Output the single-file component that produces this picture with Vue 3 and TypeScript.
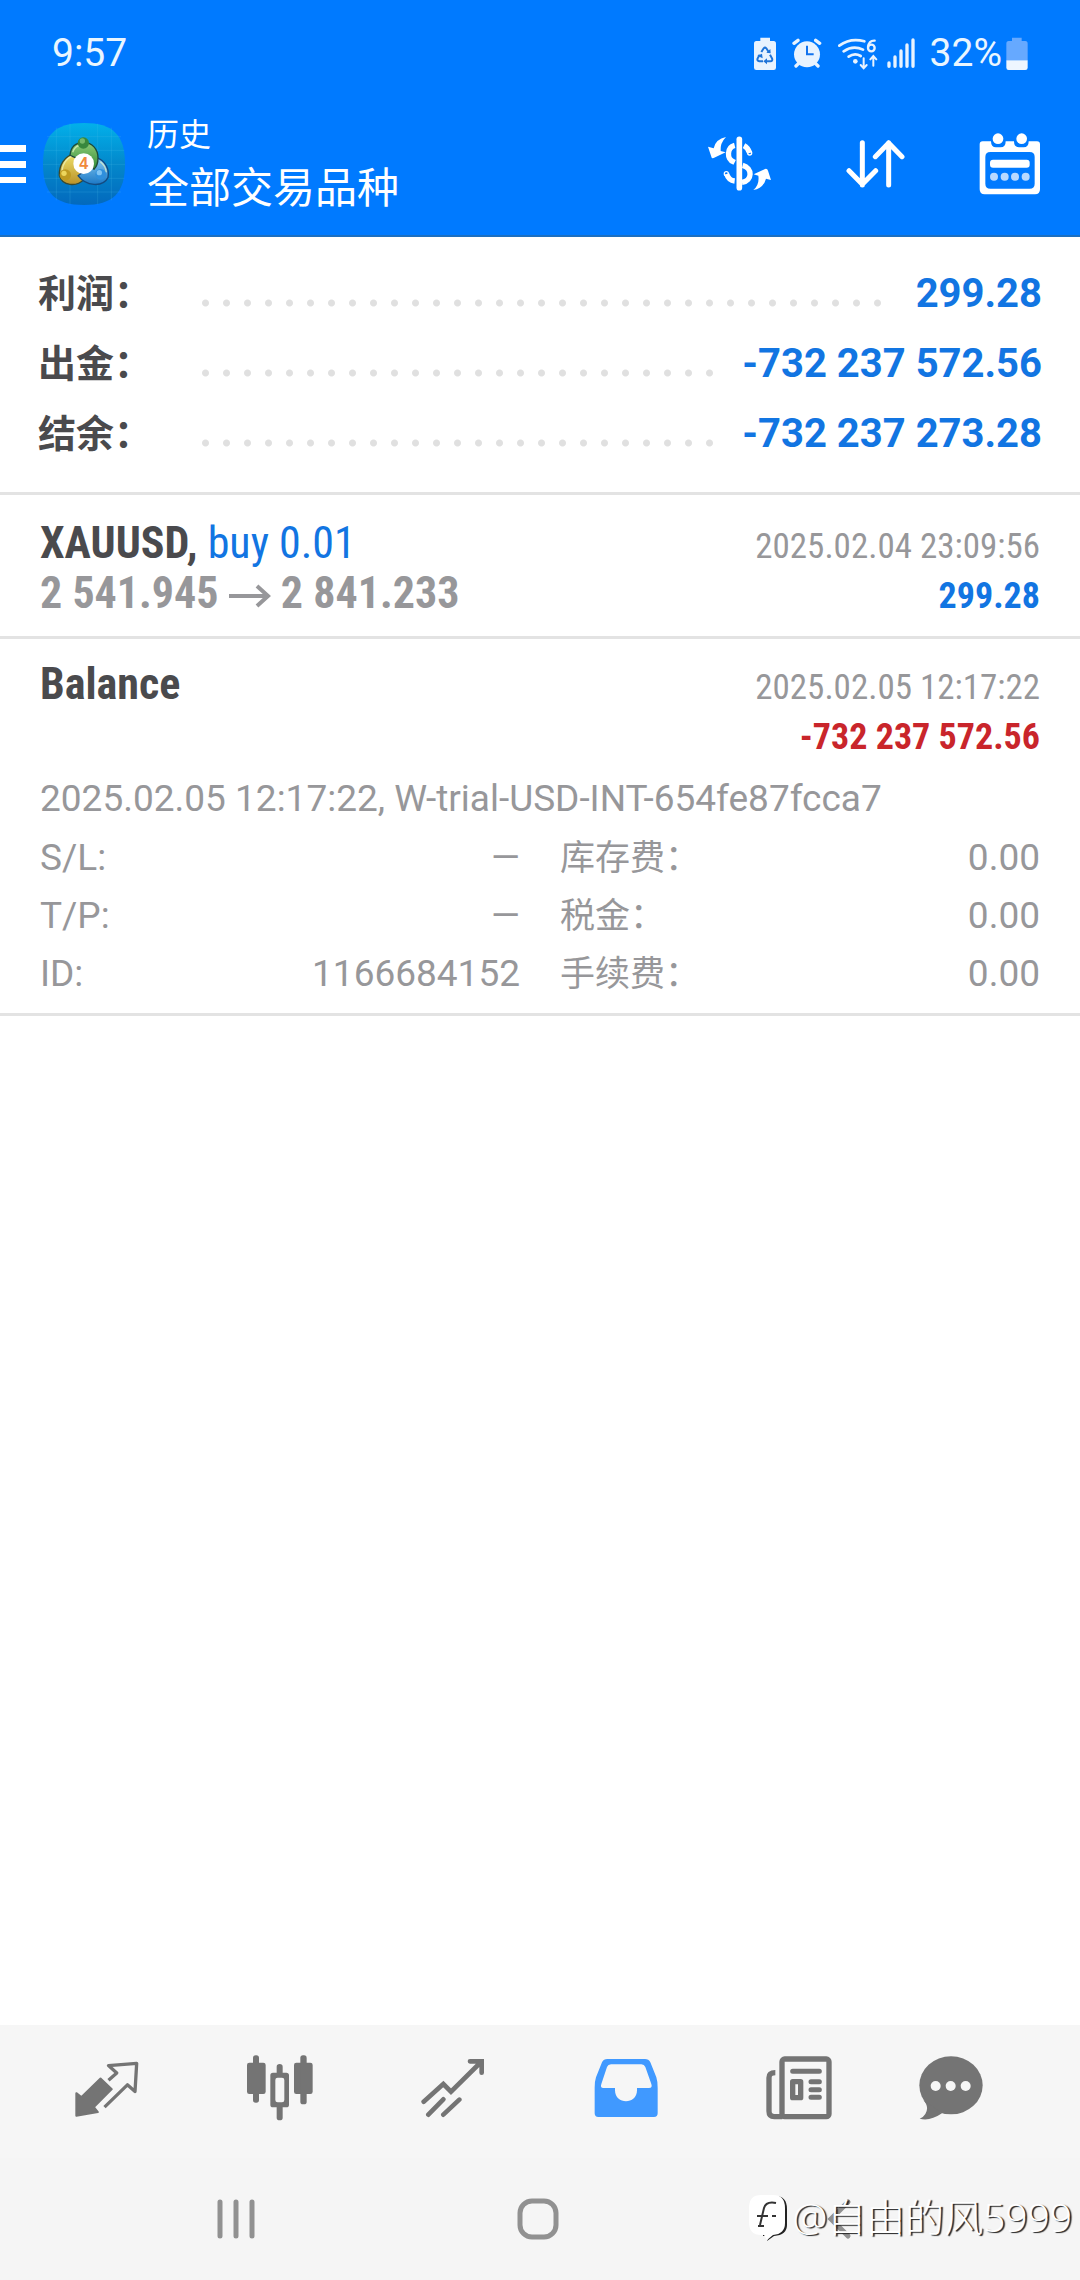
<script setup lang="ts">
interface SummaryRow {
  label: string
  value: string
}

interface DetailRow {
  label: string
  value: string
}

const summary: SummaryRow[] = [
  { label: '利润：', value: '299.28' },
  { label: '出金：', value: '-732 237 572.56' },
  { label: '结余：', value: '-732 237 273.28' },
]

const orderDetails: DetailRow[] = [
  { label: 'S/L:', value: '—' },
  { label: 'T/P:', value: '—' },
  { label: 'ID:', value: '1166684152' },
]

const feeDetails: DetailRow[] = [
  { label: '库存费：', value: '0.00' },
  { label: '税金：', value: '0.00' },
  { label: '手续费：', value: '0.00' },
]
</script>

<template>
  <div class="screen">
    <header class="top">
      <div class="status">
        <span class="clock">9:57</span>
        <svg class="saver" viewBox="159 110 66 99" width="22" height="33" aria-hidden="true">
          <path fill="#e8f3ff" d="M178 112h29v10h11q7 0 7 8v72q0 7-7 7h-52q-7 0-7-7v-72q0-8 7-8h12z" />
          <path fill="none" stroke="#1f74d8" stroke-width="6" d="M181 155l7-11q4-4 8 0l7 11M207 163l6 11q3 8-5 9h-12M186 183h-11q-8-2-5-9l6-11" />
          <path fill="#1f74d8" d="M198 174v18l-11-9zM169 166l14-6 2 14zM196 157l13 2-1-13z" />
        </svg>
        <svg class="alarm" viewBox="275 115 90 90" width="30" height="30" aria-hidden="true">
          <circle cx="320" cy="164" r="39" fill="#e8f3ff" />
          <path fill="none" stroke="#e8f3ff" stroke-width="10" stroke-linecap="round" d="M281 131l12-9M346 122l12 9M287 199l8-8M345 191l8 8" />
          <path fill="none" stroke="#1273ee" stroke-width="6" d="M320 138v26h20" />
        </svg>
        <svg class="wifi" viewBox="410 111 120 99" width="40" height="33" aria-hidden="true">
          <g fill="none" stroke="#e8f3ff" stroke-width="8" stroke-linecap="round">
            <path d="M414 137q34-25 75-13M427 154q28-19 58-5M442 170q18-13 36-2" />
            <path d="M520 122q-17-1-20 19" stroke-width="7" />
            <circle cx="510" cy="144" r="10" stroke-width="7" />
            <path d="M487 175v29M478 195l9 10 9-10M516 197v-28M507 178l9-10 9 10" stroke-width="6" />
          </g>
          <circle cx="462" cy="184" r="7" fill="#e8f3ff" />
        </svg>
        <svg class="signal" viewBox="558 115 84 90" width="28" height="30" aria-hidden="true">
          <path stroke="#e8f3ff" stroke-width="10" stroke-linecap="round" d="M564 190v10M582 172v28M600 154v46M618 136v64M636 121v79" />
        </svg>
        <span class="percent">32%</span>
        <svg class="battery" viewBox="920 110 66 99" width="22" height="33" aria-hidden="true">
          <path fill="#66a9ff" d="M938 112h29v10h11q7 0 7 8v50h-64v-50q0-8 7-8h10z" />
          <path fill="#eef6ff" d="M921 180h64v22q0 7-7 7h-50q-7 0-7-7z" />
        </svg>
      </div>

      <div class="appbar">
        <button class="icon-button menu" type="button" aria-label="菜单">
          <svg viewBox="0 0 26 38" width="26" height="38">
            <path fill="#fff" d="M0 0h26v7H0zM0 16h26v7H0zM0 32h26v6H0z" />
          </svg>
        </button>
        <svg class="logo" viewBox="40 36 246 246" width="82" height="82" aria-hidden="true">
          <defs>
            <linearGradient id="tile" x1="0" y1="0" x2="0" y2="1">
              <stop offset="0" stop-color="#02b0ea" />
              <stop offset="0.5" stop-color="#0388cb" />
              <stop offset="1" stop-color="#0369bd" />
            </linearGradient>
            <linearGradient id="green" x1="0" y1="0" x2="0" y2="1">
              <stop offset="0" stop-color="#8fcb76" />
              <stop offset="1" stop-color="#2f8a38" />
            </linearGradient>
            <linearGradient id="gold" x1="0" y1="0" x2="0" y2="1">
              <stop offset="0" stop-color="#f1e26a" />
              <stop offset="1" stop-color="#b9922a" />
            </linearGradient>
            <linearGradient id="azure" x1="0" y1="0" x2="0" y2="1">
              <stop offset="0" stop-color="#86caf2" />
              <stop offset="1" stop-color="#1b78c6" />
            </linearGradient>
          </defs>
          <path fill="url(#tile)" d="M163 36C250 36 286 72 286 159S250 282 163 282 40 246 40 159 76 36 163 36z" />
          <path fill="none" stroke="#4fc3ea" stroke-opacity="0.3" stroke-width="2" d="M80 50v218M121 38v242M204 38v242M245 50v218M52 77h222M42 118h242M40 160h246M42 202h242M52 243h222" />
          <g stroke-width="4" stroke-linejoin="round">
            <path fill="url(#gold)" stroke="#3b4a2e" d="M136 127c-34 8-48 38-47 66 8 32 52 36 74 12l-14-28z" />
            <path fill="url(#azure)" stroke="#134a80" d="M200 140c26 8 40 34 35 60-16 30-66 26-90-6l22-16z" />
            <path fill="url(#green)" stroke="#1d4a3a" d="M121 133c2-26 18-38 42-38s42 18 42 46c0 16-6 28-12 34l-22-38-36 2z" />
          </g>
          <path fill="none" stroke="#eef7c8" stroke-opacity="0.7" stroke-width="4" d="M129 124q6-18 22-22M97 178q4-30 28-42M212 152q16 12 18 32" />
          <circle cx="161" cy="96" r="17" fill="#38873d" />
          <circle cx="158" cy="90" r="8" fill="#75b86a" />
          <circle cx="107" cy="192" r="17" fill="#bd9a20" />
          <circle cx="103" cy="187" r="8" fill="#ecd65c" />
          <circle cx="213" cy="190" r="16" fill="#2f8fdc" />
          <circle cx="209" cy="185" r="8" fill="#7fc4f4" />
          <circle cx="162" cy="158" r="31" fill="#fff" />
          <text x="162" y="175" class="logo-digit" text-anchor="middle">4</text>
        </svg>
        <div class="titles">
          <p class="section">历史</p>
          <h1 class="scope">全部交易品种</h1>
        </div>
        <div class="actions">
          <button class="icon-button" type="button" aria-label="货币">
            <svg viewBox="24 408 192 165" width="64" height="55">
              <g fill="none" stroke="#fff">
                <path stroke-width="17" stroke-linecap="round" d="M118 418v145" />
                <path stroke-width="16" d="M104 436c-24 6-24 42-4 49l4 2M104 543q-18-2-24-21M132 437q12 6 17 22" />
                <path stroke-width="16" d="M128 496c30 8 30 46-2 51" />
                <circle cx="79" cy="521" r="2" stroke-width="12" />
                <circle cx="149" cy="459" r="2" stroke-width="12" />
              </g>
              <path fill="#fff" d="M78 411q-18 18-16 42l15 4-36 17q-6 2-7-4l-10-30 17 5q6-28 37-34z" />
              <path fill="#fff" d="M160 570q19-16 15-43l-14-4 34-16q7-2 9 5l9 28-15-4q-7 28-38 34z" />
            </svg>
          </button>
          <button class="icon-button" type="button" aria-label="排序">
            <svg viewBox="438 416 177 147" width="59" height="49">
              <path fill="none" stroke="#fff" stroke-width="15" stroke-linecap="round" stroke-linejoin="round" d="M487 427v127M447 511l40 41 40-41M566 554V427M526 469l40-41 40 41" />
            </svg>
          </button>
          <button class="icon-button" type="button" aria-label="日期">
            <svg viewBox="838 394 186 186" width="62" height="62">
              <path fill="#fff" fill-rule="evenodd" d="M840 428q0-9 9-9h25q0 18 15 18h14q15 0 15-18h25q0 18 15 18h14q15 0 15-18h25q9 0 9 9v135q0 15-15 15H855q-15 0-15-15zM872 451q-15 0-15 15v80q0 15 15 15h118q15 0 15-15v-80q0-15-15-15z" />
              <circle cx="895" cy="411" r="16" fill="#fff" />
              <circle cx="966" cy="411" r="16" fill="#fff" />
              <rect x="871" y="474" width="119" height="24" rx="9" fill="#fff" />
              <g fill="#b8d9ff">
                <circle cx="883" cy="525" r="12" />
                <circle cx="915" cy="525" r="12" />
                <circle cx="946" cy="525" r="12" />
                <circle cx="978" cy="525" r="12" />
              </g>
            </svg>
          </button>
        </div>
      </div>
    </header>

    <main class="content">
      <dl class="summary">
        <div v-for="row in summary" :key="row.label" class="summary-row">
          <dt>{{ row.label }}</dt>
          <dd>{{ row.value }}</dd>
        </div>
      </dl>

      <article class="entry">
        <div class="line">
          <h2 class="symbol">XAUUSD, <span class="side">buy 0.01</span></h2>
          <time class="time">2025.02.04 23:09:56</time>
        </div>
        <div class="line">
          <p class="prices">
            2 541.945
            <svg class="arrow" viewBox="0 0 42 24" width="42" height="24" role="img" aria-label="至">
              <path fill="none" stroke="#97979a" stroke-width="4" d="M0 12h39M28 2l11 10-11 10" />
            </svg>
            2 841.233
          </p>
          <p class="amount gain">299.28</p>
        </div>
      </article>

      <article class="entry open">
        <div class="line">
          <h2 class="symbol">Balance</h2>
          <time class="time">2025.02.05 12:17:22</time>
        </div>
        <div class="line">
          <p class="amount loss">-732 237 572.56</p>
        </div>
        <p class="comment">2025.02.05 12:17:22, W-trial-USD-INT-654fe87fcca7</p>
        <div class="details">
          <dl class="detail-list">
            <div v-for="row in orderDetails" :key="row.label" class="detail">
              <dt>{{ row.label }}</dt>
              <dd>{{ row.value }}</dd>
            </div>
          </dl>
          <dl class="detail-list">
            <div v-for="row in feeDetails" :key="row.label" class="detail">
              <dt>{{ row.label }}</dt>
              <dd>{{ row.value }}</dd>
            </div>
          </dl>
        </div>
      </article>
    </main>

    <nav class="tabs">
      <button class="icon-button" type="button" aria-label="行情">
        <svg viewBox="104 138 196 196" width="65" height="65">
          <path fill="#747474" stroke="#747474" stroke-width="6" stroke-linejoin="round" d="M184 206l34 32-54 54 12 15-65 11v-68l15 12z" />
          <path fill="none" stroke="#747474" stroke-width="10" stroke-linejoin="round" d="M208 211l25-22-25-22 85-7-5 85-23-20-69 67" />
        </svg>
      </button>
      <button class="icon-button" type="button" aria-label="图表">
        <svg viewBox="622 138 198 198" width="66" height="66">
          <g fill="#747474">
            <rect x="622" y="161" width="56" height="94" rx="7" />
            <rect x="640" y="139" width="18" height="142" rx="8" />
            <rect x="763" y="161" width="56" height="94" rx="7" />
            <rect x="782" y="139" width="19" height="147" rx="8" />
            <path fill-rule="evenodd" d="M711 191v-18q0-8 9-8t9 8v18h11q8 0 8 8v88q0 8-8 8h-11v31q0 8-9 8t-9-8v-31h-11q-8 0-8-8v-88q0-8 8-8zM714 206q-7 0-7 7v60q0 7 7 7h13q7 0 7-7v-60q0-7-7-7z" />
          </g>
        </svg>
      </button>
      <button class="icon-button" type="button" aria-label="交易">
        <svg viewBox="1144 138 192 192" width="64" height="64">
          <path fill="none" stroke="#747474" stroke-width="14" stroke-linecap="round" d="M1152 275l59-53 23 23 90-89M1291 154h35v34M1166 314l45-46M1211 314l48-45" />
        </svg>
      </button>
      <button class="icon-button" type="button" aria-label="历史" aria-current="page">
        <svg viewBox="284 138 192 192" width="64" height="64">
          <path fill="#4099ff" fill-rule="evenodd" d="M324 147h113q11 0 16 10l18 45q4 12 4 31v77q0 11-11 11H297q-11 0-11-11v-77q0-19 4-31l18-45q5-10 16-10zM335 163q-9 0-12 8l-17 51q-4 12 6 12h35v7c0 44 66 44 66 0v-7h36q11 0 7-12l-18-51q-3-8-12-8z" />
        </svg>
      </button>
      <button class="icon-button" type="button" aria-label="新闻">
        <svg viewBox="805 138 198 192" width="66" height="64">
          <g fill="none" stroke="#747474">
            <rect x="853" y="147" width="141" height="173" rx="8" stroke-width="16" />
            <path stroke-width="16" d="M833 188q-19 0-19 15v101q0 16 16 16h24" />
            <path stroke-width="15" stroke-linecap="round" d="M885 184h80M940 215h25M940 239h25M940 262h25" />
            <rect x="885" y="215" width="24" height="48" stroke-width="16" stroke-linejoin="round" />
          </g>
        </svg>
      </button>
      <button class="icon-button" type="button" aria-label="消息">
        <svg viewBox="1258 138 192 192" width="64" height="64">
          <ellipse cx="1354" cy="226" rx="95" ry="87" fill="#747474" />
          <path fill="#747474" d="M1271 270q19 21 6 42-5 9-17 14 30 9 67-16z" />
          <g fill="#f6f6f6">
            <circle cx="1308" cy="228" r="15" />
            <circle cx="1353" cy="228" r="15" />
            <circle cx="1398" cy="228" r="15" />
          </g>
        </svg>
      </button>
    </nav>

    <footer class="system">
      <button class="icon-button" type="button" aria-label="最近">
        <svg viewBox="0 0 38 42" width="38" height="42">
          <path stroke="#919191" stroke-width="5" stroke-linecap="round" d="M3 4v34M19 4v34M35 4v34" />
        </svg>
      </button>
      <button class="icon-button" type="button" aria-label="主页">
        <svg viewBox="0 0 42 42" width="42" height="42">
          <rect x="3" y="3" width="36" height="36" rx="12" fill="none" stroke="#919191" stroke-width="5" />
        </svg>
      </button>
      <button class="icon-button" type="button" aria-label="返回">
        <svg viewBox="0 0 26 42" width="26" height="42">
          <path fill="none" stroke="#919191" stroke-width="5" stroke-linecap="round" d="M21 4L4 21l17 17" />
        </svg>
      </button>
      <p class="signature">
        <svg viewBox="0 0 40 48" width="40" height="48" aria-hidden="true">
          <path fill="#222" d="M15 3h12q12 0 12 13v16q0 10-13 11l-7 5 2-5h-6z" />
          <path fill="#fff" d="M13 2h12q12 0 12 13v15q0 11-12 12l-6 5-3-5h-3Q1 42 1 29V15Q1 2 13 2z" />
          <path fill="none" stroke="#333" stroke-width="2" d="M28 10q-10-2-12 5l-4 17M9 23h11M24 23h4M10 33h6" />
        </svg>
        <span>@自由的风5999</span>
      </p>
    </footer>
  </div>
</template>

<style>
body {
  margin: 0;
  background: #fff;
}
</style>

<style scoped>
.screen {
  display: flex;
  flex-direction: column;
  min-height: 100vh;
  background: #fff;
  color: #97979a;
  font-family: Roboto, 'Noto Sans CJK SC', sans-serif;
}

h1,
h2,
p,
dl,
dd {
  margin: 0;
  font-weight: 400;
}

svg {
  display: block;
  flex: none;
}

.icon-button {
  display: flex;
  align-items: center;
  justify-content: center;
  padding: 0;
  border: 0;
  background: none;
}

.top {
  background: #007aff;
  border-bottom: 2px solid #1c6fc0;
  color: #fff;
}

.status {
  display: flex;
  align-items: center;
  height: 106px;
  padding: 0 52px;
  font-size: 39px;
  color: #eaf6ff;
}

.clock {
  flex: 1;
}

.alarm,
.wifi {
  margin-left: 16px;
}

.signal {
  margin-left: 9px;
}

.percent {
  margin: 0 4px 0 15px;
}

.appbar {
  display: flex;
  align-items: center;
  height: 129px;
  padding: 0 39px 14px 0;
  box-sizing: border-box;
}

.logo {
  margin-left: 17px;
}

.logo-digit {
  font: 700 48px 'Liberation Sans', sans-serif;
  fill: #f08a3c;
}

.titles {
  flex: 1;
  margin-left: 22px;
}

.section {
  font-size: 32px;
  line-height: 50px;
}

.scope {
  font-size: 42px;
  line-height: 58px;
}

.actions {
  display: flex;
  align-items: center;
  gap: 74px;
}

.content {
  flex: 1;
}

.summary {
  padding: 22px 38px 23px;
  border-bottom: 3px solid #e3e3e3;
}

.summary-row {
  display: flex;
  align-items: baseline;
  height: 70px;
  line-height: 70px;
  color: #4a4a4d;
}

.summary-row::before {
  content: '';
  order: 1;
  flex: 1;
  align-self: center;
  height: 8px;
  margin: 18px 22px 0 0;
  background: radial-gradient(circle, #e0e0e0 3px, transparent 4px) 0 0 / 21px 8px repeat-x;
}

.summary-row dt {
  width: 157px;
  font-size: 38px;
  font-weight: 700;
}

.summary-row dd {
  order: 2;
  font-size: 40px;
  font-weight: 700;
  color: #1275e2;
}

.entry {
  padding: 23px 40px 18px;
  border-bottom: 3px solid #e3e3e3;
  font-family: 'Roboto Condensed', Roboto, sans-serif;
}

.entry.open {
  padding: 20px 40px 10px;
}

.line {
  display: flex;
  align-items: baseline;
  height: 50px;
  line-height: 50px;
}

/* Keeps every line on the baseline of the large text. */
.line::before {
  content: '\200b';
  width: 0;
  font-size: 44px;
}

.symbol,
.prices {
  margin-right: auto;
  font-size: 44px;
  font-weight: 700;
}

.symbol {
  color: #4a4a4d;
}

.side {
  font-weight: 400;
  color: #1275e2;
}

.time {
  font-size: 35px;
}

.arrow {
  display: inline-block;
  vertical-align: middle;
}

.amount {
  margin-left: auto;
  font-size: 36px;
  font-weight: 700;
}

.gain {
  color: #1275e2;
}

.loss {
  color: #c9252b;
}

.comment {
  margin-top: 10px;
  font-family: Roboto, sans-serif;
  font-size: 37px;
  line-height: 60px;
}

.details {
  display: grid;
  grid-template-columns: 1fr 1fr;
  column-gap: 40px;
  font-family: Roboto, 'Noto Sans CJK SC', sans-serif;
  font-size: 37px;
}

.detail {
  display: flex;
  justify-content: space-between;
  align-items: baseline;
  height: 58px;
  line-height: 58px;
}

.detail-list:last-child dt {
  font-size: 35px;
}

.tabs {
  display: grid;
  grid-template-columns: 173fr 173fr 173fr 173fr 173fr 132fr;
  height: 126px;
  padding: 0 63px 0 20px;
  border-bottom: 7px solid #f6f6f6;
  background: #f6f6f6;
}

.system {
  position: relative;
  display: grid;
  grid-template-columns: 302fr 302fr 302fr;
  height: 122px;
  padding: 0 89px 0 85px;
  background: #f5f5f5;
}

.signature {
  position: absolute;
  right: 8px;
  top: 34px;
  display: flex;
  align-items: center;
  gap: 4px;
  font: 300 39px/50px 'Open Sans', 'Noto Sans CJK SC', sans-serif;
  color: #fff;
  text-shadow: 2px 1px 1px #222;
}
</style>
